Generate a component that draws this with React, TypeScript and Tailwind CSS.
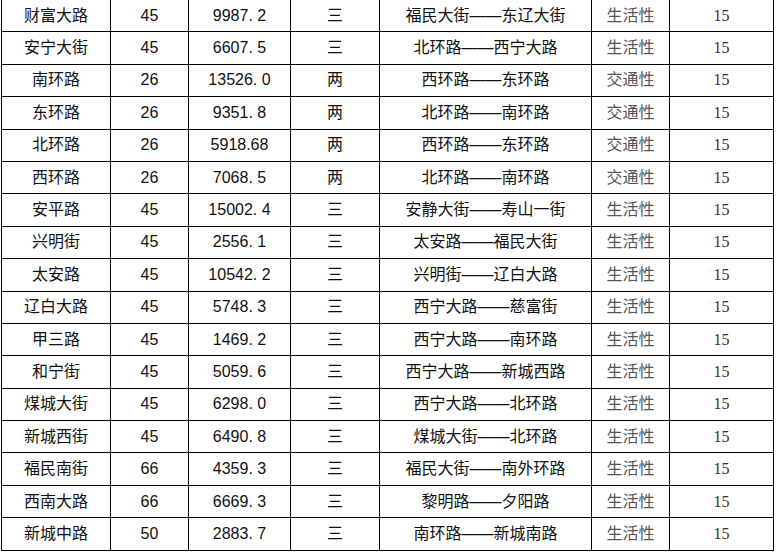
import React from 'react';

const rows: string[][] = [
  ['财富大路', '45', '9987. 2', '三', '福民大街——东辽大街', '生活性', '15'],
  ['安宁大街', '45', '6607. 5', '三', '北环路——西宁大路', '生活性', '15'],
  ['南环路', '26', '13526. 0', '两', '西环路——东环路', '交通性', '15'],
  ['东环路', '26', '9351. 8', '两', '北环路——南环路', '交通性', '15'],
  ['北环路', '26', '5918.68', '两', '西环路——东环路', '交通性', '15'],
  ['西环路', '26', '7068. 5', '两', '北环路——南环路', '交通性', '15'],
  ['安平路', '45', '15002. 4', '三', '安静大街——寿山一街', '生活性', '15'],
  ['兴明街', '45', '2556. 1', '三', '太安路——福民大街', '生活性', '15'],
  ['太安路', '45', '10542. 2', '三', '兴明街——辽白大路', '生活性', '15'],
  ['辽白大路', '45', '5748. 3', '三', '西宁大路——慈富街', '生活性', '15'],
  ['甲三路', '45', '1469. 2', '三', '西宁大路——南环路', '生活性', '15'],
  ['和宁街', '45', '5059. 6', '三', '西宁大路——新城西路', '生活性', '15'],
  ['煤城大街', '45', '6298. 0', '三', '西宁大路——北环路', '生活性', '15'],
  ['新城西街', '45', '6490. 8', '三', '煤城大街——北环路', '生活性', '15'],
  ['福民南街', '66', '4359. 3', '三', '福民大街——南外环路', '生活性', '15'],
  ['西南大路', '66', '6669. 3', '三', '黎明路——夕阳路', '生活性', '15'],
  ['新城中路', '50', '2883. 7', '三', '南环路——新城南路', '生活性', '15'],
];

// 每列的样式：前五列黑色黑体，第六列灰色，第七列衬线体
const cellStyle = [
  'text-[#111]',
  'text-[#111]',
  'text-[#111]',
  'text-[#111]',
  'text-[#111]',
  'text-[#555]',
  "text-[#333] text-[16px] font-['Liberation_Serif','Noto_Sans_CJK_SC',serif]",
];

export default function App() {
  return (
    <div className="w-[776px] h-[553px] bg-white overflow-hidden font-['Liberation_Sans','Noto_Sans_CJK_SC',sans-serif] text-[16px]">
      <div className="ml-[1px] w-[773px] grid grid-cols-[109px_78px_102px_89px_212px_78px_104px] auto-rows-[32.4px] border-r border-black">
        {rows.map((row, i) =>
          row.map((cell, j) => (
            <div
              key={`${i}-${j}`}
              className={`flex items-center justify-center border-l border-b border-black leading-none whitespace-nowrap ${cellStyle[j]}`}
            >
              {cell}
            </div>
          ))
        )}
      </div>
    </div>
  );
}
